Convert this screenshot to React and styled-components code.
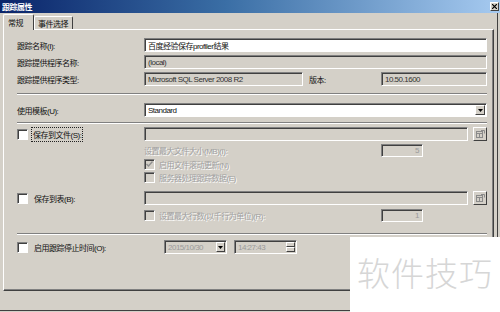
import React from "react";
import styled, { createGlobalStyle } from "styled-components";

const GlobalStyle = createGlobalStyle`
  html, body {
    margin: 0;
    padding: 0;
    background: #d4d0c8;
  }
  body {
    width: 500px;
    height: 312px;
    overflow: hidden;
    font-family: "Liberation Sans", "Noto Sans CJK SC", sans-serif;
    font-size: 8px;
    letter-spacing: -0.5px;
    color: #111;
  }
`;

const Window = styled.div`
  position: relative;
  width: 500px;
  height: 312px;
  background: #d4d0c8;
  overflow: hidden;
`;

const TitleBar = styled.div`
  height: 13px;
  display: flex;
  align-items: center;
  justify-content: space-between;
  padding: 0 1px 0 2px;
  background: linear-gradient(to right, #0a246a 0%, #3a6ea5 45%, #a6caf0 100%);
  color: #fff;
  font-weight: bold;
  box-sizing: border-box;
`;

const CloseBtn = styled.span`
  width: 9px;
  height: 9px;
  box-sizing: border-box;
  background: #d4d0c8;
  border: 1px solid;
  border-color: #fff #404040 #404040 #fff;
  display: flex;
  align-items: center;
  justify-content: center;
`;

const Body = styled.div`
  width: 498px;
  height: 298px;
  box-sizing: border-box;
  border-right: 1px solid #404040;
  border-bottom: 1px solid #404040;
  padding: 0 3px;
  display: flex;
  flex-direction: column;
`;

const TabStrip = styled.div`
  height: 16px;
  display: flex;
  align-items: flex-end;
  position: relative;
  z-index: 1;
`;

const Tab = styled.div`
  height: ${p => (p.$active ? 16 : 13)}px;
  margin-bottom: ${p => (p.$active ? -1 : 0)}px;
  padding: 0 ${p => (p.$active ? 10 : 4)}px 0 ${p => (p.$active ? 4 : 3)}px;
  box-sizing: border-box;
  display: flex;
  align-items: center;
  background: #d4d0c8;
  border-top: 1px solid #fff;
  border-left: 1px solid #fff;
  border-right: 1px solid #404040;
  border-top-left-radius: 2px;
  border-top-right-radius: 2px;
`;

const Panel = styled.div`
  height: 262px;
  box-sizing: border-box;
  border: 1px solid;
  border-color: #fff #404040 #404040 #fff;
  box-shadow: inset -1px -1px #808080;
  padding: 8px 6px 0 13px;
  display: flex;
  flex-direction: column;
`;

const Row = styled.div`
  display: grid;
  grid-template-columns: ${p => p.$cols || "127px 1fr"};
  align-items: center;
  height: ${p => p.$h || 14}px;
  margin-top: ${p => p.$mt || 0}px;
`;

const Label = styled.span`
  white-space: nowrap;
  color: ${p => (p.$disabled ? "#a0a0a0" : "#111")};
  text-shadow: ${p => (p.$disabled ? "1px 1px #fff" : "none")};
  padding-left: ${p => p.$pl || 0}px;
`;

const Field = styled.div`
  height: ${p => p.$h || 14}px;
  width: ${p => (p.$w ? `${p.$w}px` : "auto")};
  box-sizing: border-box;
  border: 1px solid;
  border-color: #808080 #fff #fff #808080;
  box-shadow: inset 1px 1px #404040;
  background: ${p => (p.$disabled ? "#d4d0c8" : "#fff")};
  color: ${p => (p.$disabled ? "#333" : "#111")};
  display: flex;
  align-items: center;
  justify-content: ${p => (p.$right ? "flex-end" : "space-between")};
  padding: 0 1px 0 3px;
  white-space: nowrap;
  overflow: hidden;
`;

const Dim = styled.span`
  color: #9a9a9a;
  padding-right: ${p => p.$pr || 0}px;
`;

const Separator = styled.div`
  height: 0;
  border-top: 1px solid #808080;
  border-bottom: 1px solid #fff;
  margin-top: ${p => p.$mt}px;
`;

const SmallBtn = styled.span`
  width: ${p => p.$w || 10}px;
  height: ${p => p.$h || 10}px;
  box-sizing: border-box;
  background: #d4d0c8;
  border: 1px solid;
  border-color: #fff #404040 #404040 #fff;
  display: flex;
  align-items: center;
  justify-content: center;
  flex-shrink: 0;
`;

const Spinner = styled.span`
  display: flex;
  flex-direction: column;
  flex-shrink: 0;
`;

const PathRow = styled.div`
  display: grid;
  grid-template-columns: 1fr 14px;
  gap: 5px;
  align-items: center;
`;

const Check = styled.span`
  width: 11px;
  height: 11px;
  box-sizing: border-box;
  border: 1px solid;
  border-color: #808080 #fff #fff #808080;
  box-shadow: inset 1px 1px #404040;
  background: ${p => (p.$disabled ? "#d4d0c8" : "#fff")};
  display: flex;
  align-items: center;
  justify-content: center;
  flex-shrink: 0;
`;

const CheckLabel = styled.label`
  display: flex;
  align-items: center;
  gap: ${p => p.$gap || 4}px;
`;

const Focus = styled.span`
  outline: 1px dotted #222;
  padding: 1px 1px;
  white-space: nowrap;
`;

const StopTime = styled.div`
  display: flex;
  align-items: center;
  gap: 7px;
  padding-left: 20px;
`;

const Watermark = styled.div`
  position: absolute;
  left: 350px;
  top: 237px;
  width: 150px;
  height: 75px;
  background: #fff;
  display: flex;
  align-items: center;
  justify-content: center;
  padding-bottom: 6px;
  box-sizing: border-box;
  font-family: "Noto Sans CJK SC", sans-serif;
  font-size: 33px;
  font-weight: 300;
  letter-spacing: 1px;
  color: #d6d6d6;
`;

const Arrow = () => (
  <svg width="5" height="3" viewBox="0 0 5 3">
    <path d="M0 0h5L2.5 3z" fill="#000" />
  </svg>
);

const Tick = ({ color }) => (
  <svg width="7" height="7" viewBox="0 0 7 7">
    <path d="M0.5 3l2 2 4-4.5" fill="none" stroke={color} strokeWidth="1.4" />
  </svg>
);

const BrowseIcon = () => (
  <svg width="9" height="8" viewBox="0 0 9 8">
    <rect x="0.5" y="1.5" width="6" height="6" fill="none" stroke="#8a8a8a" />
    <path d="M0.5 3.5h6M3.5 3.5v4" stroke="#8a8a8a" />
    <path d="M5 0.5h3.5v3" fill="none" stroke="#8a8a8a" />
  </svg>
);

const Checkbox = ({ checked, disabled }) => (
  <Check $disabled={disabled}>
    {checked && <Tick color={disabled ? "#909090" : "#000"} />}
  </Check>
);

export default function App() {
  return (
    <Window>
      <GlobalStyle />
      <TitleBar>
        <span>跟踪属性</span>
        <CloseBtn>
          <svg width="5" height="5" viewBox="0 0 5 5">
            <path d="M0 0l5 5M5 0l-5 5" stroke="#000" strokeWidth="1.2" />
          </svg>
        </CloseBtn>
      </TitleBar>
      <Body>
        <TabStrip>
          <Tab $active>常规</Tab>
          <Tab>事件选择</Tab>
        </TabStrip>
        <Panel>
          <Row>
            <Label>跟踪名称(I):</Label>
            <Field>百度经验保存profiler结果</Field>
          </Row>
          <Row $mt={3}>
            <Label>跟踪提供程序名称:</Label>
            <Field $disabled>(local)</Field>
          </Row>
          <Row $mt={3} $cols="127px 159px 78px 1fr">
            <Label>跟踪提供程序类型:</Label>
            <Field $disabled>Microsoft SQL Server 2008 R2</Field>
            <Label $pl={6}>版本:</Label>
            <Field $disabled>10.50.1600</Field>
          </Row>
          <Separator $mt={7} />
          <Row $mt={8}>
            <Label>使用模板(U):</Label>
            <Field>
              Standard
              <SmallBtn $w={10} $h={10}>
                <Arrow />
              </SmallBtn>
            </Field>
          </Row>
          <Separator $mt={5} />
          <Row $mt={3}>
            <CheckLabel>
              <Checkbox />
              <Focus>保存到文件(S):</Focus>
            </CheckLabel>
            <PathRow>
              <Field $disabled />
              <SmallBtn $w={14} $h={14}>
                <BrowseIcon />
              </SmallBtn>
            </PathRow>
          </Row>
          <Row $mt={3} $h={13} $cols="127px 237px 42px">
            <span />
            <Label $disabled>设置最大文件大小(MB)(I):</Label>
            <Field $disabled $h={13} $right>
              <Dim $pr={2}>5</Dim>
            </Field>
          </Row>
          <Row $mt={1} $h={12}>
            <span />
            <CheckLabel>
              <Checkbox checked disabled />
              <Label $disabled>启用文件滚动更新(N)</Label>
            </CheckLabel>
          </Row>
          <Row $mt={1} $h={12}>
            <span />
            <CheckLabel>
              <Checkbox disabled />
              <Label $disabled>服务器处理跟踪数据(E)</Label>
            </CheckLabel>
          </Row>
          <Row $mt={8}>
            <CheckLabel $gap={6}>
              <Checkbox />
              <Label>保存到表(B):</Label>
            </CheckLabel>
            <PathRow>
              <Field $disabled />
              <SmallBtn $w={14} $h={14}>
                <BrowseIcon />
              </SmallBtn>
            </PathRow>
          </Row>
          <Row $mt={4} $h={13} $cols="127px 237px 42px">
            <span />
            <CheckLabel>
              <Checkbox disabled />
              <Label $disabled>设置最大行数(以千行为单位)(R):</Label>
            </CheckLabel>
            <Field $disabled $h={13} $right>
              <Dim $pr={2}>1</Dim>
            </Field>
          </Row>
          <Separator $mt={11} />
          <Row $mt={5}>
            <CheckLabel $gap={6}>
              <Checkbox />
              <Label>启用跟踪停止时间(O):</Label>
            </CheckLabel>
            <StopTime>
              <Field $disabled $w={63}>
                <Dim>2015/10/30</Dim>
                <SmallBtn $w={9} $h={10}>
                  <Arrow />
                </SmallBtn>
              </Field>
              <Field $disabled $w={63}>
                <Dim>14:27:43</Dim>
                <Spinner>
                  <SmallBtn $w={9} $h={5} />
                  <SmallBtn $w={9} $h={5} />
                </Spinner>
              </Field>
            </StopTime>
          </Row>
        </Panel>
      </Body>
      <Watermark>软件技巧</Watermark>
    </Window>
  );
}
